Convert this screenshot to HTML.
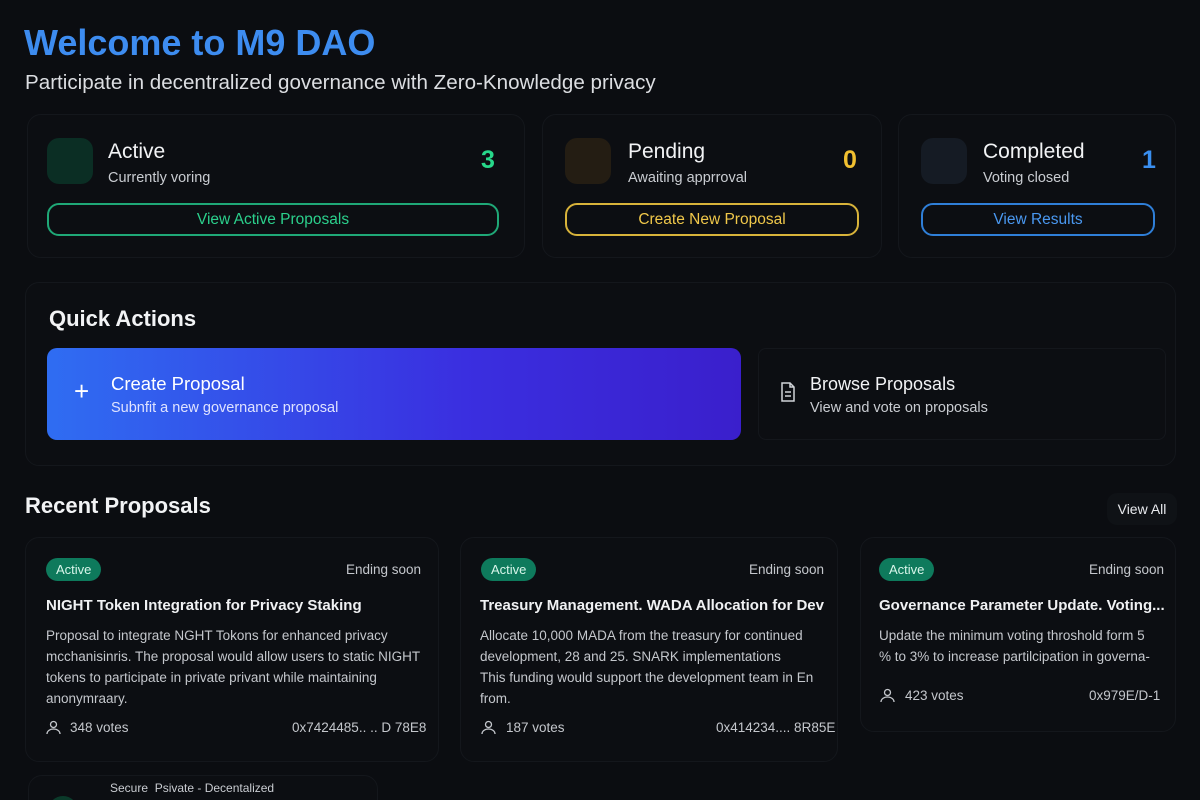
<!DOCTYPE html>
<html><head><meta charset="utf-8"><style>
*{box-sizing:border-box;margin:0;padding:0}
html,body{width:1200px;height:800px;overflow:hidden}
body{background:#0b0d11;font-family:"Liberation Sans",sans-serif;color:#e8eaee;position:relative}
.a{position:absolute;white-space:nowrap}
.card{position:absolute;border:1px solid #14171c;border-radius:14px;background:#0c0e12}
.ic{position:absolute;width:46px;height:46px;border-radius:12px}
.t{font-size:21px;color:#f2f3f5}
.s{font-size:14.5px;color:#c9ccd1}
.btn{position:absolute;height:33px;border-radius:12px;border:2px solid;font-size:15.5px;text-align:center;line-height:29px}
.badge{position:absolute;background:#0e7a5c;color:#d8f5ea;font-size:13px;border-radius:12px;padding:4px 10px}
.pt{font-size:15px;font-weight:bold;color:#f0f1f3}
.pd{font-size:13.5px;color:#c4c7cc;line-height:21px}
.meta{font-size:13.5px;color:#c4c7cc}
</style></head><body>
<div class="a" style="left:24px;top:22px;font-size:36px;font-weight:bold;color:#3d8cf0">Welcome to M9 DAO</div>
<div class="a" style="left:25px;top:71px;font-size:20.6px;color:#dcdee2">Participate in decentralized governance with Zero-Knowledge privacy</div>

<div class="card" style="left:27px;top:114px;width:498px;height:144px"></div>
<div class="ic" style="left:47px;top:138px;background:#0b2e24"></div>
<div class="a t" style="left:108px;top:140px">Active</div>
<div class="a s" style="left:108px;top:170px">Currently voring</div>
<div class="a" style="left:481px;top:146px;font-size:25px;font-weight:bold;color:#27d88a">3</div>
<div class="btn" style="left:47px;top:203px;width:452px;border-color:#1fa877;color:#2bd08c">View Active Proposals</div>

<div class="card" style="left:542px;top:114px;width:340px;height:144px"></div>
<div class="ic" style="left:565px;top:138px;background:#241d13"></div>
<div class="a t" style="left:628px;top:140px">Pending</div>
<div class="a s" style="left:628px;top:170px">Awaiting apprroval</div>
<div class="a" style="left:843px;top:146px;font-size:25px;font-weight:bold;color:#f2c030">0</div>
<div class="btn" style="left:565px;top:203px;width:294px;border-color:#d8b33a;color:#f0c84a">Create New Proposal</div>

<div class="card" style="left:898px;top:114px;width:278px;height:144px"></div>
<div class="ic" style="left:921px;top:138px;background:#151b24"></div>
<div class="a t" style="left:983px;top:140px">Completed</div>
<div class="a s" style="left:983px;top:170px">Voting closed</div>
<div class="a" style="left:1142px;top:146px;font-size:25px;font-weight:bold;color:#3a8ff0">1</div>
<div class="btn" style="left:921px;top:203px;width:234px;border-color:#2f7fd8;color:#4a98f0">View Results</div>

<div class="card" style="left:25px;top:282px;width:1151px;height:184px"></div>
<div class="a" style="left:49px;top:306px;font-size:22px;font-weight:bold;color:#f2f3f5">Quick Actions</div>
<div class="a" style="left:47px;top:348px;width:694px;height:92px;border-radius:10px;background:linear-gradient(90deg,#2f6df2,#3a2fe0 60%,#3a1fcc)"></div>
<div class="a" style="left:74px;top:376px;font-size:26px;color:#fff">+</div>
<div class="a" style="left:111px;top:373px;font-size:18.5px;color:#fff">Create Proposal</div>
<div class="a" style="left:111px;top:400px;font-size:14.5px;color:#dfe3ff">Subnfit a new governance proposal</div>
<div class="card" style="left:758px;top:348px;width:408px;height:92px;border-radius:8px"></div>
<svg class="a" style="left:780px;top:382px" width="16" height="20" viewBox="0 0 16 20" fill="none" stroke="#d0d3d8" stroke-width="1.5"><path d="M2 1h8l4 4v14H2z M10 1v4h4 M5 10h6 M5 14h6"/></svg>
<div class="a" style="left:810px;top:374px;font-size:18px;color:#f2f3f5">Browse Proposals</div>
<div class="a" style="left:810px;top:400px;font-size:14.5px;color:#c9ccd1">View and vote on proposals</div>

<div class="a" style="left:25px;top:493px;font-size:22px;font-weight:bold;color:#f2f3f5">Recent Proposals</div>
<div class="a" style="left:1107px;top:493px;width:70px;height:32px;border-radius:10px;background:#0f1216;font-size:14px;line-height:32px;text-align:center;color:#e8eaee">View All</div>

<div class="card" style="left:25px;top:537px;width:414px;height:225px"></div>
<div class="badge" style="left:46px;top:558px">Active</div>
<div class="a meta" style="left:346px;top:562px">Ending soon</div>
<div class="a pt" style="left:46px;top:597px">NIGHT Token Integration for Privacy Staking</div>
<div class="a pd" style="left:46px;top:625px">Proposal to integrate NGHT Tokons for enhanced privacy<br>mcchanisinris. The proposal would allow users to static NIGHT<br>tokens to participate in private privant while maintaining<br>anonymraary.</div>
<svg class="a" style="left:46px;top:720px" width="15" height="15" viewBox="0 0 15 15" fill="none" stroke="#c4c7cc" stroke-width="1.3"><circle cx="7.5" cy="4.5" r="3"/><path d="M1 14c0-3 3-5 6.5-5s6.5 2 6.5 5"/></svg>
<div class="a meta" style="left:70px;top:720px">348 votes</div>
<div class="a meta" style="left:292px;top:720px">0x7424485.. .. D 78E8</div>

<div class="card" style="left:460px;top:537px;width:378px;height:225px"></div>
<div class="badge" style="left:481px;top:558px">Active</div>
<div class="a meta" style="left:749px;top:562px">Ending soon</div>
<div class="a pt" style="left:480px;top:597px;width:345px;overflow:hidden">Treasury Management. WADA Allocation for Dev</div>
<div class="a pd" style="left:480px;top:625px">Allocate 10,000 MADA from the treasury for continued<br>development, 28 and 25. SNARK implementations<br>This funding would support the development team in En<br>from.</div>
<svg class="a" style="left:481px;top:720px" width="15" height="15" viewBox="0 0 15 15" fill="none" stroke="#c4c7cc" stroke-width="1.3"><circle cx="7.5" cy="4.5" r="3"/><path d="M1 14c0-3 3-5 6.5-5s6.5 2 6.5 5"/></svg>
<div class="a meta" style="left:506px;top:720px">187 votes</div>
<div class="a meta" style="left:716px;top:720px">0x414234.... 8R85E</div>

<div class="card" style="left:860px;top:537px;width:316px;height:195px"></div>
<div class="badge" style="left:879px;top:558px">Active</div>
<div class="a meta" style="left:1089px;top:562px">Ending soon</div>
<div class="a pt" style="left:879px;top:597px">Governance Parameter Update. Voting...</div>
<div class="a pd" style="left:879px;top:625px">Update the minimum voting throshold form 5<br>% to 3% to increase partilcipation in governa-</div>
<svg class="a" style="left:880px;top:688px" width="15" height="15" viewBox="0 0 15 15" fill="none" stroke="#c4c7cc" stroke-width="1.3"><circle cx="7.5" cy="4.5" r="3"/><path d="M1 14c0-3 3-5 6.5-5s6.5 2 6.5 5"/></svg>
<div class="a meta" style="left:905px;top:688px">423 votes</div>
<div class="a meta" style="left:1089px;top:688px">0x979E/D-1</div>

<div class="card" style="left:28px;top:775px;width:350px;height:60px"></div>
<div class="a" style="left:110px;top:781px;font-size:12px;color:#c9ccd1">Secure &nbsp;Psivate - Decentalized</div>
<div class="a" style="left:48px;top:796px;width:30px;height:30px;border-radius:50%;background:#0b3a2a"></div>
</body></html>
